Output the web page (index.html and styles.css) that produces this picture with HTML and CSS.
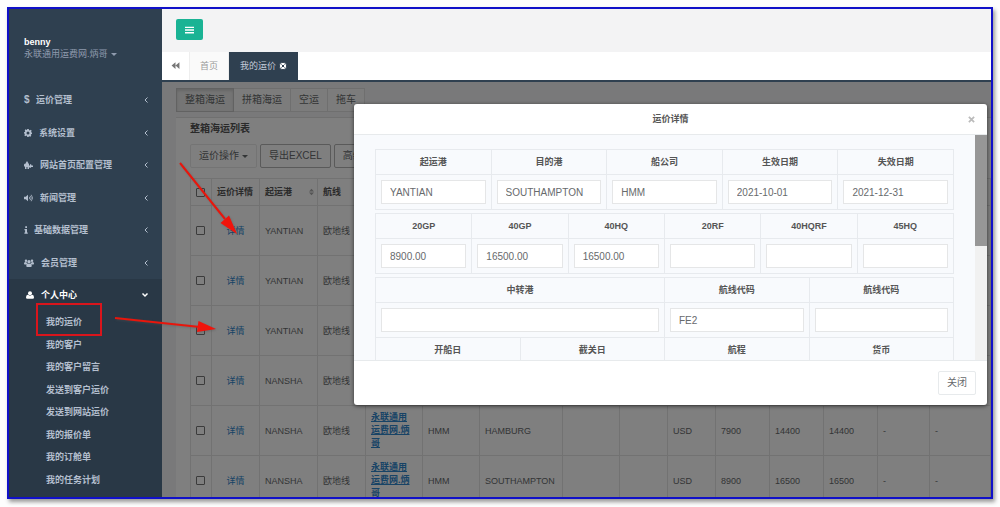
FILE: index.html
```html
<!DOCTYPE html>
<html lang="zh-CN">
<head>
<meta charset="utf-8">
<title>我的运价</title>
<link rel="stylesheet" href="styles.css">
</head>
<body>
<div class="frame">
  <aside class="sidebar">
    <div class="profile">
      <strong>benny</strong>
      <a href="#">永联通用运费网.炳哥<span class="caret"></span></a>
    </div>
    <ul class="nav">
      <li><a href="#"><span class="dollar">$</span>运价管理<svg class="chev" viewBox="0 0 6 8"><path d="M4.500 1.500L2 4l2.500 2.500"/></svg></a></li>
      <li><a href="#"><svg class="ico w8" viewBox="0 0 16 16"><path fill-rule="evenodd" d="M6.500 0h3l.5 2.200 1.400.6L13.400 1.500l2 2-1.200 2 .5 1.300 1.300.3v2.800l-1.800.5-.6 1.400 1 1.800-2 2-1.900-1-1.300.6L9.200 16H6.500L6 13.800l-1.400-.6-2 1.200-2-2 1.200-1.900L1.200 9.200 0 9V6.500L1.800 6l.6-1.400-1-1.900 2-2 1.900 1.100L6 1.500zM8 5a3 3 0 100 6 3 3 0 000-6z"/></svg>系统设置<svg class="chev" viewBox="0 0 6 8"><path d="M4.500 1.500L2 4l2.500 2.500"/></svg></a></li>
      <li><a href="#"><svg class="ico w9" viewBox="0 0 18 16"><path d="M3.500 4L6 0l2.500 4-.8 1H10v4h2V7l2-1 1 3h3v3h-3.500L13 14l-1.500-1H10v3H7v-4H5v4H2v-5H0V7l2-2h2.300z"/></svg>网站首页配置管理<svg class="chev" viewBox="0 0 6 8"><path d="M4.500 1.500L2 4l2.500 2.500"/></svg></a></li>
      <li><a href="#"><svg class="ico w9" viewBox="0 0 18 16"><path d="M0 5.500h3.500L8 1.500v13l-4.500-4H0z"/><path class="wave" d="M10.500 5.500q2 2.500 0 5M12.500 3.500q4 4.500 0 9M14.500 1.500q5.500 6.500 0 13"/></svg>新闻管理<svg class="chev" viewBox="0 0 6 8"><path d="M4.500 1.500L2 4l2.500 2.500"/></svg></a></li>
      <li><a href="#"><svg class="ico w4" viewBox="0 0 8 16"><path d="M2.500 0.500h3.500v3.500H2.500zM1 6h5v7h1.500v2.500H.8V13h1.400V8.500H1z"/></svg>基础数据管理<svg class="chev" viewBox="0 0 6 8"><path d="M4.500 1.500L2 4l2.500 2.500"/></svg></a></li>
      <li><a href="#"><svg class="ico w10" viewBox="0 0 20 16"><circle cx="4" cy="3.500" r="2.500"/><circle cx="16" cy="3.500" r="2.500"/><circle cx="10" cy="5.500" r="3.300"/><path d="M0 9q0-3 2.500-3l3 .8Q6 9 7 9.500q-2 .5-2.500 1.500H1.500Q0 11 0 9zM20 9q0-3-2.500-3l-3 .8Q14 9 13 9.500q2 .5 2.500 1.500h3Q20 11 20 9zM4.500 13.500Q4.500 9.500 7 9q3 1.500 6 0 2.500.5 2.500 4.500 0 2.500-2 2.500h-7q-2 0-2-2.500z"/></svg>会员管理<svg class="chev" viewBox="0 0 6 8"><path d="M4.500 1.500L2 4l2.500 2.500"/></svg></a></li>
    </ul>
    <div class="section">
      <a href="#" class="section-head"><svg class="ico w8" viewBox="0 0 16 16"><circle cx="8" cy="4.300" r="4"/><path d="M0 13q0-5 3.500-5.300Q8 11 12.500 7.700 16 8 16 13q0 2.500-2.500 2.500h-11Q0 15.500 0 13z"/></svg>个人中心<svg class="chev down" viewBox="0 0 8 6"><path d="M1.500 1.500L4 4l2.500-2.500"/></svg></a>
      <ul class="subnav">
        <li class="marked"><a href="#">我的运价</a></li>
        <li><a href="#">我的客户</a></li>
        <li><a href="#">我的客户留言</a></li>
        <li><a href="#">发送到客户运价</a></li>
        <li><a href="#">发送到网站运价</a></li>
        <li><a href="#">我的报价单</a></li>
        <li><a href="#">我的订舱单</a></li>
        <li><a href="#">我的任务计划</a></li>
      </ul>
    </div>
  </aside>

  <main class="main">
    <header class="topbar">
      <button type="button" class="menu-btn" aria-label="菜单"><svg viewBox="0 0 10 8"><path d="M0 1h10M0 4h10M0 7h10"/></svg></button>
    </header>
    <nav class="tabs">
      <button type="button" class="tab-roll" aria-label="向左"><svg viewBox="0 0 16 12"><path d="M8 0v12L1 6zM15 0v12L8 6z"/></svg></button>
      <a href="#" class="tab">首页</a>
      <a href="#" class="tab active">我的运价<svg viewBox="0 0 16 16"><circle cx="8" cy="8" r="7.500"/><path d="M5 5l6 6M11 5l-6 6"/></svg></a>
    </nav>

    <div class="content">
      <div class="page">
        <div class="modes">
          <button type="button" class="on">整箱海运</button><button type="button">拼箱海运</button><button type="button">空运</button><button type="button">拖车</button>
        </div>
        <section class="panel">
          <h5>整箱海运列表</h5>
          <div class="tools">
            <button type="button" class="plain">运价操作<span class="caret"></span></button>
            <button type="button">导出EXCEL</button>
            <button type="button">高级查询</button>
          </div>
          <table class="rates">
            <colgroup><col class="c21"><col class="c48"><col class="c58"><col class="c48"><col class="c57"><col class="c57"><col class="c83"><col class="c57"><col class="c48"><col class="c48"><col class="c54"><col class="c54"><col class="c54"><col class="c52"><col></colgroup>
            <thead>
              <tr><th><input type="checkbox" aria-label="全选"></th><th>运价详情</th><th><span class="sort">起运港<svg viewBox="0 0 6 8"><path d="M0 3.300L3 0l3 3.300zM0 4.700L3 8l3-3.300z"/></svg></span></th><th>航线</th><th></th><th></th><th></th><th></th><th></th><th></th><th></th><th></th><th></th><th></th><th></th></tr>
            </thead>
            <tbody>
              <tr><td><input type="checkbox" aria-label="选择"></td><td class="mid"><a href="#">详情</a></td><td>YANTIAN</td><td>欧地线</td><td></td><td></td><td></td><td></td><td></td><td></td><td></td><td></td><td></td><td></td><td></td></tr>
              <tr><td><input type="checkbox" aria-label="选择"></td><td class="mid"><a href="#">详情</a></td><td>YANTIAN</td><td>欧地线</td><td></td><td></td><td></td><td></td><td></td><td></td><td></td><td></td><td></td><td></td><td></td></tr>
              <tr><td><input type="checkbox" aria-label="选择"></td><td class="mid"><a href="#">详情</a></td><td>YANTIAN</td><td>欧地线</td><td></td><td></td><td></td><td></td><td></td><td></td><td></td><td></td><td></td><td></td><td></td></tr>
              <tr><td><input type="checkbox" aria-label="选择"></td><td class="mid"><a href="#">详情</a></td><td>NANSHA</td><td>欧地线</td><td></td><td></td><td></td><td></td><td></td><td></td><td></td><td></td><td></td><td></td><td></td></tr>
              <tr><td><input type="checkbox" aria-label="选择"></td><td class="mid"><a href="#">详情</a></td><td>NANSHA</td><td>欧地线</td><td><a href="#" class="firm">永联通用运费网.炳哥</a></td><td>HMM</td><td>HAMBURG</td><td></td><td></td><td>USD</td><td>7900</td><td>14400</td><td>14400</td><td>-</td><td>-</td></tr>
              <tr><td><input type="checkbox" aria-label="选择"></td><td class="mid"><a href="#">详情</a></td><td>NANSHA</td><td>欧地线</td><td><a href="#" class="firm">永联通用运费网.炳哥</a></td><td>HMM</td><td>SOUTHAMPTON</td><td></td><td></td><td>USD</td><td>8900</td><td>16500</td><td>16500</td><td>-</td><td>-</td></tr>
            </tbody>
          </table>
        </section>
      </div>

      <div class="backdrop">
        <div class="modal" role="dialog" aria-labelledby="dlg">
          <div class="modal-head">
            <h4 id="dlg">运价详情</h4>
            <button type="button" class="close" aria-label="关闭"><svg viewBox="0 0 8 8"><path d="M1 1l6 6M7 1L1 7"/></svg></button>
          </div>
          <div class="modal-body">
            <div class="detail">
              <table>
                <tr><th id="a1">起运港</th><th id="a2">目的港</th><th id="a3">船公司</th><th id="a4">生效日期</th><th id="a5">失效日期</th></tr>
                <tr><td><input type="text" aria-labelledby="a1" value="YANTIAN"></td><td><input type="text" aria-labelledby="a2" value="SOUTHAMPTON"></td><td><input type="text" aria-labelledby="a3" value="HMM"></td><td><input type="text" aria-labelledby="a4" value="2021-10-01"></td><td><input type="text" aria-labelledby="a5" value="2021-12-31"></td></tr>
              </table>
              <table>
                <tr><th id="b1">20GP</th><th id="b2">40GP</th><th id="b3">40HQ</th><th id="b4">20RF</th><th id="b5">40HQRF</th><th id="b6">45HQ</th></tr>
                <tr><td><input type="text" aria-labelledby="b1" value="8900.00"></td><td><input type="text" aria-labelledby="b2" value="16500.00"></td><td><input type="text" aria-labelledby="b3" value="16500.00"></td><td><input type="text" aria-labelledby="b4"></td><td><input type="text" aria-labelledby="b5"></td><td><input type="text" aria-labelledby="b6"></td></tr>
              </table>
              <table>
                <tr><th colspan="2" id="c1">中转港</th><th id="c2">航线代码</th><th id="c3">航线代码</th></tr>
                <tr><td colspan="2"><input type="text" aria-labelledby="c1"></td><td><input type="text" aria-labelledby="c2" value="FE2"></td><td><input type="text" aria-labelledby="c3"></td></tr>
                <tr><th>开船日</th><th>截关日</th><th>航程</th><th>货币</th></tr>
              </table>
            </div>
            <div class="track"><div class="thumb"></div></div>
          </div>
          <div class="modal-foot"><button type="button">关闭</button></div>
        </div>
      </div>
    </div>
  </main>

  <svg class="arrows" width="260" height="360" viewBox="0 0 260 360">
    <path class="shaft" d="M171 154l45 56M106 309l85 9"/>
    <path class="tip" d="M228 225l-16.500-11 8.500-7.500zM207 320l-19 3 1.500-11z"/>
  </svg>
</div>
</body>
</html>
```
FILE: styles.css
```css
*, *::after { box-sizing: border-box; }
body {
  margin: 0;
  padding: 7px 7px 8px;
  height: 100vh;
  background: #fdfdfd;
  font: 9px/12px "Liberation Sans", "Noto Sans CJK SC", sans-serif;
  color: #676a6c;
}
button, input { font: inherit; color: inherit; margin: 0; }
a { color: inherit; text-decoration: none; }
ul { list-style: none; margin: 0; padding: 0; }
table { border-collapse: collapse; table-layout: fixed; width: 100%; }
.frame {
  position: relative;
  display: flex;
  height: 100%;
  border: 2px solid #1010c8;
  box-shadow: 2px 3px 4px #999;
  overflow: hidden;
}
.caret {
  display: inline-block;
  margin-left: 3px;
  vertical-align: middle;
  border: 3px solid transparent;
  border-top-color: currentColor;
  border-bottom: 0;
}

/* sidebar */
.sidebar {
  flex: none;
  width: 153px;
  display: flex;
  flex-direction: column;
  background: #2f4050;
  color: #b4bfce;
  font-weight: bold;
}
.profile {
  display: flex;
  flex-direction: column;
  padding: 27px 15px 0;
  height: 75px;
  color: #8f9bae;
  font-weight: normal;
}
.profile strong { color: #fff; }
.nav { display: grid; grid-auto-rows: 1fr; height: 195px; }
.nav a, .section-head {
  display: flex;
  align-items: center;
  height: 100%;
  padding: 0 13px 0 15px;
}
.dollar { width: 12px; font-size: 10px; }
.ico { height: 8px; margin-right: 7px; fill: currentColor; }
.w4 { width: 4px; margin-right: 6px; }
.w8 { width: 8px; }
.w9 { width: 9px; }
.w10 { width: 10px; }
.wave { fill: none; stroke: currentColor; stroke-width: 1.5; }
.chev {
  width: 6px;
  height: 8px;
  margin-left: auto;
  fill: none;
  stroke: currentColor;
}
.chev.down { width: 8px; height: 6px; stroke-width: 1.5; }
.section {
  flex: 1;
  display: flex;
  flex-direction: column;
  padding-bottom: 6px;
  background: #293846;
}
.section .section-head { height: 32px; padding-left: 17px; color: #fff; }
.subnav { flex: 1; display: grid; grid-auto-rows: 1fr; }
.subnav li { position: relative; display: flex; align-items: center; padding-left: 37px; }
.marked::after {
  content: "";
  position: absolute;
  left: 27px;
  top: -8px;
  width: 66px;
  height: 33px;
  border: 2px solid #d9151c;
}

/* top area */
.main { flex: 1; min-width: 0; display: flex; flex-direction: column; }
.topbar { flex: none; height: 43px; padding: 10px 14px; background: #f3f3f4; }
.menu-btn {
  display: flex;
  align-items: center;
  justify-content: center;
  width: 27px;
  height: 21px;
  padding: 0;
  border: 0;
  border-radius: 2px;
  background: #1ab394;
}
.menu-btn svg { width: 9px; height: 8px; stroke: #fff; stroke-width: 1.5; }
.tabs {
  flex: none;
  display: flex;
  height: 30px;
  background: #fff;
  border-bottom: 2px solid #2f4050;
  font-size: 9px;
  color: #999;
}
.tab-roll { width: 28px; padding: 0; border: 0; border-right: 1px solid #eee; background: #fff; }
.tab-roll svg { width: 9px; height: 7px; fill: #777; }
.tab {
  display: flex;
  align-items: center;
  padding: 0 10px;
  border-right: 1px solid #eee;
  background: #fafafa;
}
.tab.active { padding: 0 11px; border: 0; background: #2f4050; color: #c3cbd8; }
.tab svg { width: 8px; height: 8px; margin-left: 3px; fill: #fff; stroke: #2f4050; stroke-width: 2; }

/* page */
.content { position: relative; flex: 1; min-height: 0; overflow: hidden; background: #f3f3f4; }
.page { padding: 6px 0 0 14px; }
.modes { display: flex; margin-bottom: 5px; font-size: 10px; }
.modes button {
  height: 24px;
  padding: 0 8px;
  border: 1px solid #dfdfdf;
  border-left-width: 0;
  background: #f8f8f8;
}
.modes .on { border: 1px solid #c4c4c4; background: #ebebeb; box-shadow: inset 0 2px 3px #ccc; }
.panel { padding: 5px 0 0 14px; border-top: 1px solid #e0e0e0; background: #fff; }
.panel h5 { margin: 0 0 9px; font-size: 10px; line-height: 12px; color: #555; }
.tools { display: flex; gap: 3px; margin-bottom: 10px; font-size: 10px; }
.tools button {
  height: 24px;
  padding: 0 8px;
  border: 1px solid #b4b4b4;
  border-radius: 2px;
  background: #fff;
  white-space: nowrap;
}
.tools .plain { border-color: #e9e9e9; }
.c21 { width: 21px; } .c48 { width: 48px; } .c52 { width: 52px; } .c54 { width: 54px; }
.c57 { width: 57px; } .c58 { width: 58px; } .c83 { width: 83px; }
.rates th, .rates td { border: 1px solid #e4e4e4; padding: 0 5px; text-align: left; white-space: nowrap; }
.rates th { height: 27px; color: #555; }
.rates td { height: 50px; }
.rates td:nth-child(5) { padding-right: 11px; line-height: 13px; white-space: normal; }
.rates .mid { text-align: center; }
.rates a { color: #2f86cc; }
.rates .firm { font-weight: bold; text-decoration: underline; }
.rates input {
  display: block;
  appearance: none;
  width: 9px;
  height: 9px;
  border: 1px solid #777;
  border-radius: 1px;
}
.sort { display: flex; justify-content: space-between; align-items: center; }
.sort svg { width: 5px; height: 8px; margin-right: -2px; fill: #aaa; }

/* dialog */
.backdrop {
  position: absolute;
  inset: 0;
  padding: 22px 4px 0 192px;
  background: rgba(0, 0, 0, 0.5);
}
.modal { border-radius: 3px; background: #fff; box-shadow: 0 1px 4px rgba(0, 0, 0, 0.6); }
.modal-head {
  display: flex;
  align-items: center;
  height: 31px;
  padding: 0 11px 0 19px;
  border-bottom: 1px solid #e7eaec;
}
.modal-head h4 { flex: 1; margin: 0; font-size: 9px; text-align: center; color: #555; }
.close { width: 8px; height: 12px; padding: 0; border: 0; background: none; }
.close svg { display: block; width: 7px; height: 7px; stroke: #bbb; stroke-width: 2; }
.modal-body { display: flex; height: 225px; overflow: hidden; background: #f8fafd; }
.detail { flex: 1; padding: 14px 21px 0; }
.detail table { margin-bottom: 3px; }
.detail th, .detail td { border: 1px solid #e7eaee; }
.detail th { height: 25px; padding: 0; color: #555; }
.detail td { height: 35px; padding: 0 5px; }
.detail input {
  display: block;
  width: 100%;
  height: 24px;
  padding: 0 8px;
  border: 1px solid #e5e6e7;
  background: #fff;
  font-size: 10px;
}
.track { width: 12px; background: #f1f1f1; }
.thumb { height: 111px; background: #979797; }
.modal-foot {
  display: flex;
  justify-content: flex-end;
  align-items: center;
  height: 45px;
  padding: 0 11px;
  border-top: 1px solid #e7eaec;
}
.modal-foot button {
  height: 24px;
  padding: 0 8px;
  border: 1px solid #e7eaec;
  border-radius: 2px;
  background: #fff;
  font-size: 10px;
}

/* pointer arrows */
.arrows { position: absolute; left: 0; top: 0; pointer-events: none; filter: drop-shadow(1px 1px 1px #5556); }
.shaft { stroke: #e8160c; stroke-width: 2; }
.tip { fill: #f0140c; }
```
